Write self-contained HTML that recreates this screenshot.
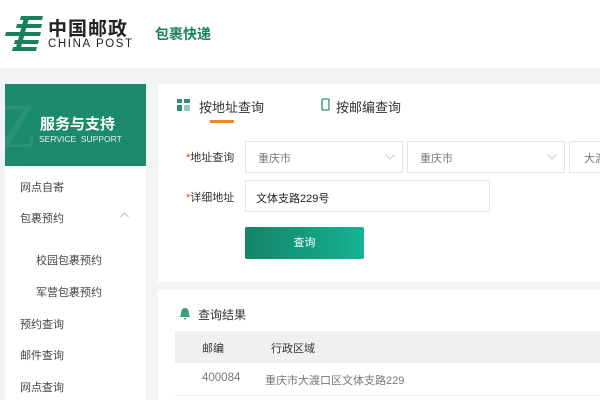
<!DOCTYPE html>
<html><head><meta charset="utf-8"><style>
*{margin:0;padding:0;box-sizing:border-box}
body{width:600px;height:400px;overflow:hidden;background:#f2f3f5;font-family:"Liberation Sans","Noto Sans CJK SC",sans-serif;position:relative;color:#333}
.a{position:absolute;white-space:nowrap}
.hdr{position:absolute;left:0;top:0;width:600px;height:68px;background:#fff}
.side{position:absolute;left:5px;top:84px;width:141px;height:316px;background:#fff}
.ban{position:absolute;left:5px;top:84px;width:141px;height:82px;background:#1b8b69;overflow:hidden}
.main{position:absolute;left:158px;top:84px;width:442px;height:198px;background:#fff}
.res{position:absolute;left:158px;top:290px;width:442px;height:110px;background:#fff}
.sel{position:absolute;top:141px;height:32px;border:1px solid #e4e4e4;background:#fff;font-size:11px;color:#777;padding:8px 0 0 12px}
.lab{font-size:11px;color:#333}
.lab b{color:#e33;font-weight:normal}
.nav{font-size:11px;color:#444}
</style></head><body>
<div class="hdr"></div>
<svg class="a" style="left:5px;top:14px" width="38" height="38" viewBox="0 0 38 38">
<g fill="#1a7f5c">
<polygon points="16,2 38,2 37,6 15,6"/>
<polygon points="12,10 37,10 36,14 11,14"/>
<polygon points="1,18 36,18 35,22 0,22"/>
<polygon points="10,26 34,26 33,30 9,30"/>
<polygon points="8,33 32,33 31,37 7,37"/>
<polygon points="19,4 24,4 15,37 10,37"/>
</g></svg>
<div class="a" style="left:48px;top:14px;font-size:19px;font-weight:bold;color:#222;letter-spacing:1px">中国邮政</div>
<div class="a" style="left:48px;top:38px;font-size:11.5px;color:#222;letter-spacing:1.6px">CHINA POST</div>
<div class="a" style="left:155px;top:24px;font-size:14px;font-weight:bold;color:#1a7f5c">包裹快递</div>

<div class="side"></div>
<div class="ban"><div class="a" style="left:-6px;top:8px;font-size:62px;color:rgba(255,255,255,.07);font-family:'Liberation Serif',serif">Z</div>
<div class="a" style="left:35px;top:29px;font-size:15px;font-weight:bold;color:#fff">服务与支持</div>
<div class="a" style="left:34px;top:50px;font-size:8.5px;color:#e6f2ee">SERVICE&nbsp; SUPPORT</div></div>
<div class="a nav" style="left:20px;top:179px">网点自寄</div>
<div class="a nav" style="left:20px;top:210px">包裹预约</div>
<svg class="a" style="left:120px;top:212px" width="9" height="6"><path d="M0.5 5L4.5 1L8.5 5" fill="none" stroke="#bbb" stroke-width="1"/></svg>
<div class="a nav" style="left:36px;top:252px">校园包裹预约</div>
<div class="a nav" style="left:36px;top:284px">军营包裹预约</div>
<div class="a nav" style="left:20px;top:316px">预约查询</div>
<div class="a nav" style="left:20px;top:347px">邮件查询</div>
<div class="a nav" style="left:20px;top:379px">网点查询</div>

<div class="main"></div>
<svg class="a" style="left:177px;top:99px" width="13" height="12"><g fill="#2f8f6f"><rect x="0" y="0" width="5" height="4"/><rect x="7" y="0" width="6" height="4"/><rect x="0" y="6" width="5" height="6"/><rect x="7" y="6" width="6" height="6" fill="#9ac9b6"/></g></svg>
<div class="a" style="left:199px;top:97px;font-size:13px;color:#333">按地址查询</div>
<div class="a" style="left:210px;top:120px;width:24px;height:3px;background:#f08a1d"></div>
<svg class="a" style="left:321px;top:98px" width="9" height="13"><rect x="1" y="1" width="7" height="11" rx="1" fill="none" stroke="#2f8f6f" stroke-width="1.3"/></svg>
<div class="a" style="left:336px;top:97px;font-size:13px;color:#333">按邮编查询</div>

<div class="a lab" style="left:186px;top:149px"><b>*</b>地址查询</div>
<div class="sel" style="left:245px;width:158px">重庆市<svg class="a" style="left:139px;top:12px" width="10" height="6"><path d="M0.5 0.5L5 5L9.5 0.5" fill="none" stroke="#ccc" stroke-width="1"/></svg></div>
<div class="sel" style="left:407px;width:158px">重庆市<svg class="a" style="left:139px;top:12px" width="10" height="6"><path d="M0.5 0.5L5 5L9.5 0.5" fill="none" stroke="#ccc" stroke-width="1"/></svg></div>
<div class="sel" style="left:569px;width:40px;padding-left:14px">大渡</div>
<div class="a lab" style="left:186px;top:189px"><b>*</b>详细地址</div>
<div class="sel" style="left:245px;top:180px;width:245px;color:#222;padding-left:10px;padding-top:9px">文体支路229号</div>
<div class="a" style="left:245px;top:227px;width:119px;height:32px;border-radius:2px;background:linear-gradient(90deg,#138466,#15b395);color:#fff;font-size:11px;text-align:center;line-height:32px">查询</div>

<div class="res"></div>
<svg class="a" style="left:179px;top:307px" width="12" height="13"><path d="M6 1C3 1 2 4 2 7L1 10H11L10 7C10 4 9 1 6 1Z M4.5 11H7.5L6 13Z" fill="#3aa07c"/></svg>
<div class="a" style="left:198px;top:306px;font-size:12px;color:#333">查询结果</div>
<div class="a" style="left:175px;top:331px;width:425px;height:32px;background:#f0f0f0"></div>
<div class="a" style="left:202px;top:340px;font-size:11px;color:#333">邮编</div>
<div class="a" style="left:271px;top:340px;font-size:11px;color:#333">行政区域</div>
<div class="a" style="left:175px;top:395px;width:425px;height:1px;background:#eee"></div>
<div class="a" style="left:202px;top:372px;font-size:11.5px;color:#777">400084</div>
<div class="a" style="left:265px;top:372px;font-size:11px;color:#777">重庆市大渡口区文体支路229</div>
</body></html>
